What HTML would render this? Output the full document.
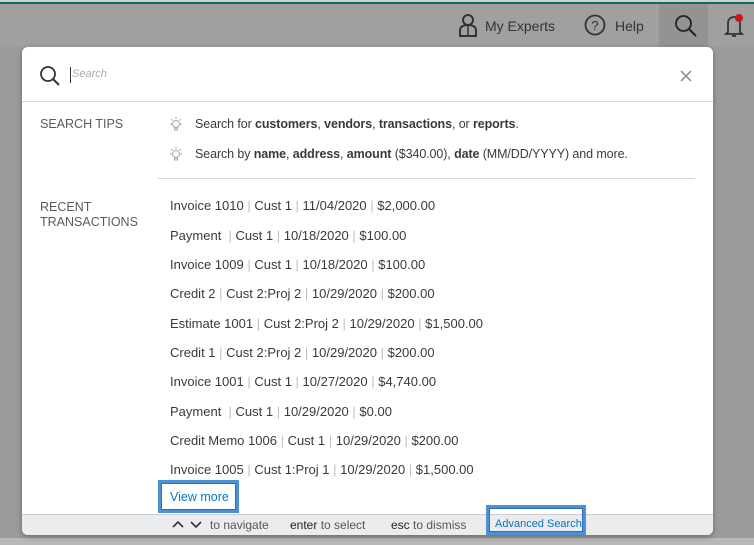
<!DOCTYPE html>
<html><head><meta charset="utf-8"><style>
*{box-sizing:border-box;margin:0;padding:0}
body{width:754px;height:545px;overflow:hidden;background:#9b9b9b;font-family:"Liberation Sans",sans-serif;position:relative;color:#393a3d}
.top{position:absolute;left:0;top:0;width:754px;height:4px;background:#cfcfcf;border-bottom:2px solid #0d6e5f}
.hdr{position:absolute;left:0;top:4px;width:754px;height:43px;background:#a0a0a0}
.hl{position:absolute;left:659px;top:4px;width:49px;height:43px;background:#939393}
.ht{position:absolute;top:18px;font-size:14px;color:#333}
.bot{position:absolute;left:0;top:538px;width:754px;height:7px;background:#b8b8b8}
.modal{position:absolute;left:22px;top:47px;width:691px;height:488px;background:#fff;border-radius:6px;overflow:hidden;box-shadow:0 2px 6px rgba(0,0,0,.3)}
.sb{height:55px;border-bottom:1px solid #d4d7dc;position:relative}
.lbl{position:absolute;left:18px;font-size:12.5px;color:#5a5b5e;line-height:15px}
.tip{position:absolute;left:148px;font-size:12.5px;color:#393a3d;letter-spacing:-0.1px}
.tip b{font-weight:bold;color:#393a3d}
.row{position:absolute;left:148px;font-size:13px;color:#393a3d}
.row span{color:#babec5}
.foot{position:absolute;left:0;top:467px;width:691px;height:21px;background:#ebecee;border-top:1px solid #c9ccd1;font-size:12px;color:#555}
</style></head><body>
<div class="top"></div>
<div class="hdr"></div>
<div class="hl"></div>
<svg style="position:absolute;left:458px;top:13px" width="20" height="24" viewBox="0 0 20 24"><circle cx="10" cy="7" r="5" fill="none" stroke="#333" stroke-width="2"/><path d="M2 23v-6c0-3 3-5 8-5s8 2 8 5v6z" fill="none" stroke="#333" stroke-width="2"/><path d="M10 13v10" stroke="#333" stroke-width="1.5"/></svg>
<div class="ht" style="left:485px">My Experts</div>
<svg style="position:absolute;left:584px;top:14px" width="22" height="22"><circle cx="11" cy="11" r="9.5" fill="none" stroke="#333" stroke-width="1.8"/><text x="11" y="16" font-size="13" text-anchor="middle" fill="#333" font-family="Liberation Sans">?</text></svg>
<div class="ht" style="left:615px">Help</div>
<svg style="position:absolute;left:674px;top:14px" width="24" height="24"><circle cx="9.5" cy="9.5" r="7.5" fill="none" stroke="#222" stroke-width="1.8"/><path d="M15 15l7 7" stroke="#222" stroke-width="2"/></svg>
<svg style="position:absolute;left:724px;top:12px" width="22" height="26"><path d="M4 20V11c0-4 3-6 6-6s6 2 6 6v9l2 2H2z" fill="none" stroke="#333" stroke-width="1.8"/><path d="M8 24h4" stroke="#333" stroke-width="1.8"/><circle cx="15" cy="6" r="4" fill="#c8171b"/></svg>
<div class="bot"></div>
<div class="modal">
 <div class="sb">
  <svg style="position:absolute;left:17px;top:18px" width="22" height="22"><circle cx="9" cy="9" r="7" fill="none" stroke="#333" stroke-width="1.8"/><path d="M14 14l6 6" stroke="#333" stroke-width="2"/></svg>
  <div style="position:absolute;left:48px;top:20px;width:1px;height:16px;background:#333"></div>
  <div style="position:absolute;left:50px;top:21px;font-size:11px;color:#aaa;font-style:italic">Search</div>
  <svg style="position:absolute;left:658px;top:23px" width="12" height="12"><path d="M1 1l10 10M11 1L1 11" stroke="#888" stroke-width="1.5"/></svg>
 </div>
 <div class="lbl" style="top:70px">SEARCH TIPS</div>
 <div class="lbl" style="top:153px">RECENT<br>TRANSACTIONS</div>
 <svg style="position:absolute;left:146px;top:69px" width="16" height="16"><circle cx="8" cy="8" r="3.5" fill="none" stroke="#aaa"/><path d="M8 1v2M2 8h2M12 8h2M3 3l1.5 1.5M13 3l-1.5 1.5M6.5 12h3v2h-3z" stroke="#aaa" fill="none"/></svg>
 <svg style="position:absolute;left:146px;top:99px" width="16" height="16"><circle cx="8" cy="8" r="3.5" fill="none" stroke="#aaa"/><path d="M8 1v2M2 8h2M12 8h2M3 3l1.5 1.5M13 3l-1.5 1.5M6.5 12h3v2h-3z" stroke="#aaa" fill="none"/></svg>
 <div class="tip" style="left:173px;top:70px">Search for <b>customers</b>, <b>vendors</b>, <b>transactions</b>, or <b>reports</b>.</div>
 <div class="tip" style="left:173px;top:100px">Search by <b>name</b>, <b>address</b>, <b>amount</b> ($340.00), <b>date</b> (MM/DD/YYYY) and more.</div>
 <div style="position:absolute;left:136px;top:131px;width:537px;height:1px;background:#d4d7dc"></div>
 <div class="row" style="top:151px">Invoice 1010 <span>|</span> Cust 1 <span>|</span> 11/04/2020 <span>|</span> $2,000.00</div>
 <div class="row" style="top:181px">Payment &nbsp;<span>|</span> Cust 1 <span>|</span> 10/18/2020 <span>|</span> $100.00</div>
 <div class="row" style="top:210px">Invoice 1009 <span>|</span> Cust 1 <span>|</span> 10/18/2020 <span>|</span> $100.00</div>
 <div class="row" style="top:239px">Credit 2 <span>|</span> Cust 2:Proj 2 <span>|</span> 10/29/2020 <span>|</span> $200.00</div>
 <div class="row" style="top:269px">Estimate 1001 <span>|</span> Cust 2:Proj 2 <span>|</span> 10/29/2020 <span>|</span> $1,500.00</div>
 <div class="row" style="top:298px">Credit 1 <span>|</span> Cust 2:Proj 2 <span>|</span> 10/29/2020 <span>|</span> $200.00</div>
 <div class="row" style="top:327px">Invoice 1001 <span>|</span> Cust 1 <span>|</span> 10/27/2020 <span>|</span> $4,740.00</div>
 <div class="row" style="top:357px">Payment &nbsp;<span>|</span> Cust 1 <span>|</span> 10/29/2020 <span>|</span> $0.00</div>
 <div class="row" style="top:386px">Credit Memo 1006 <span>|</span> Cust 1 <span>|</span> 10/29/2020 <span>|</span> $200.00</div>
 <div class="row" style="top:415px">Invoice 1005 <span>|</span> Cust 1:Proj 1 <span>|</span> 10/29/2020 <span>|</span> $1,500.00</div>
 <div class="foot">
  <svg style="position:absolute;left:150px;top:4px" width="32" height="10"><path d="M1 8l5-5 5 5M19 3l5 5 5-5" fill="none" stroke="#333" stroke-width="1.6"/></svg>
  <div style="position:absolute;left:188px;top:3px">to navigate</div>
  <div style="position:absolute;left:268px;top:3px"><span style="color:#222">enter</span> to select</div>
  <div style="position:absolute;left:369px;top:3px"><span style="color:#222">esc</span> to dismiss</div>
 </div>
 <div style="position:absolute;left:136px;top:433px;width:81px;height:33px;border:3px solid #4f8fd3;box-shadow:inset 0 0 0 1px #2e6fb5;background:#fff;font-size:12.5px;color:#0077c5;padding:7px 0 0 9px">View more</div>
 <div style="position:absolute;left:464px;top:458px;width:100px;height:30px;border:3px solid #4f8fd3;box-shadow:inset 0 0 0 1px #2e6fb5;font-size:11px;color:#0077c5;padding:10px 0 0 6px">Advanced Search</div>
</div>
</body></html>
